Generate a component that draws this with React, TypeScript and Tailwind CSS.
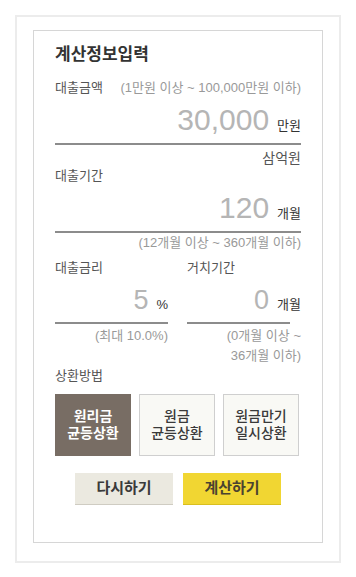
const font = { fontFamily: '"Liberation Sans", "Noto Sans CJK KR", sans-serif' };

function AmountRow({ value, unit, size = 'big' }: { value: string; unit: string; size?: 'big' | 'small' }) {
  return (
    <div className="flex h-[34px] items-baseline justify-end">
      <span
        className={`leading-[34px] text-[#b5b5b5] ${size === 'big' ? 'text-[30px]' : 'text-[27px]'}`}
      >
        {value}
      </span>
      <span className="ml-[8px] text-[13px] leading-[18px] text-[#333]">{unit}</span>
    </div>
  );
}

function MethodButton({ lines, active = false }: { lines: string[]; active?: boolean }) {
  return (
    <button
      className={`flex h-[62px] w-[76px] flex-col items-center justify-center text-[14px] leading-[17px] ${
        active
          ? 'bg-[#786d64] font-bold text-white'
          : 'border border-[#cfcfcf] bg-[#f9f9f5] font-medium text-[#3a3a3a]'
      }`}
    >
      {lines.map((l) => (
        <span key={l}>{l}</span>
      ))}
    </button>
  );
}

export default function App() {
  return (
    <div className="w-[356px] bg-white pl-[15px] pt-[15px]" style={font}>
      <div className="w-[326px] border-2 border-[#ececec] pb-[18px] pl-[16px] pr-[16px] pt-[13px]">
        <div className="border border-[#d6d6d6] pb-[37px] pl-[21px] pr-[21px] pt-[14px]">
          {/* Title */}
          <h2 className="text-[17px] font-bold leading-[20px] text-[#333]">계산정보입력</h2>

          {/* 대출금액 */}
          <div className="mt-[15px] flex justify-between text-[13px] leading-[16px]">
            <span className="text-[#555]">대출금액</span>
            <span className="text-[#999]">(1만원 이상 ~ 100,000만원 이하)</span>
          </div>
          <div className="mt-[7px]">
            <AmountRow value="30,000" unit="만원" />
          </div>
          <div className="mt-[6px] h-[2px] bg-[#8c8c8c]" />
          <p className="mt-[4px] text-right text-[14px] leading-[18px] text-[#555]">삼억원</p>

          {/* 대출기간 */}
          <p className="mt-[1px] text-[13px] leading-[16px] text-[#555]">대출기간</p>
          <div className="mt-[7px]">
            <AmountRow value="120" unit="개월" />
          </div>
          <div className="mt-[6px] h-[2px] bg-[#8c8c8c]" />
          <p className="mt-[2px] text-right text-[13px] leading-[16px] text-[#999]">
            (12개월 이상 ~ 360개월 이하)
          </p>

          {/* 대출금리 / 거치기간 */}
          <div className="mt-[9px] grid grid-cols-[113px_114px] gap-x-[19px]">
            <div>
              <p className="text-[13px] leading-[16px] text-[#555]">대출금리</p>
              <div className="mt-[7px]">
                <AmountRow value="5" unit="%" size="small" />
              </div>
              <div className="mt-[5px] h-[2px] bg-[#8c8c8c]" />
              <p className="mt-[2px] text-right text-[13px] leading-[20px] text-[#999]">(최대 10.0%)</p>
            </div>
            <div>
              <p className="text-[13px] leading-[16px] text-[#555]">거치기간</p>
              <div className="mt-[7px]">
                <AmountRow value="0" unit="개월" size="small" />
              </div>
              <div className="mt-[5px] h-[2px] w-[103px] bg-[#8c8c8c]" />
              <p className="mt-[2px] text-right text-[13px] leading-[20px] text-[#999]">
                (0개월 이상 ~
                <br />
                36개월 이하)
              </p>
            </div>
          </div>

          {/* 상환방법 */}
          <p className="mt-[2px] text-[13px] leading-[16px] text-[#555]">상환방법</p>
          <div className="mt-[10px] flex gap-[8px]">
            <MethodButton lines={['원리금', '균등상환']} active />
            <MethodButton lines={['원금', '균등상환']} />
            <MethodButton lines={['원금만기', '일시상환']} />
          </div>

          {/* Actions */}
          <div className="mt-[17px] flex justify-center gap-[10px]">
            <button className="h-[32px] w-[98px] border-b border-[#cfccc2] bg-[#ebe9e0] text-[15px] font-bold text-[#3a3a3a]">
              다시하기
            </button>
            <button className="h-[32px] w-[98px] border-b border-[#d9bf1f] bg-[#f1d632] text-[15px] font-bold text-[#4a4330]">
              계산하기
            </button>
          </div>
        </div>
      </div>
    </div>
  );
}
